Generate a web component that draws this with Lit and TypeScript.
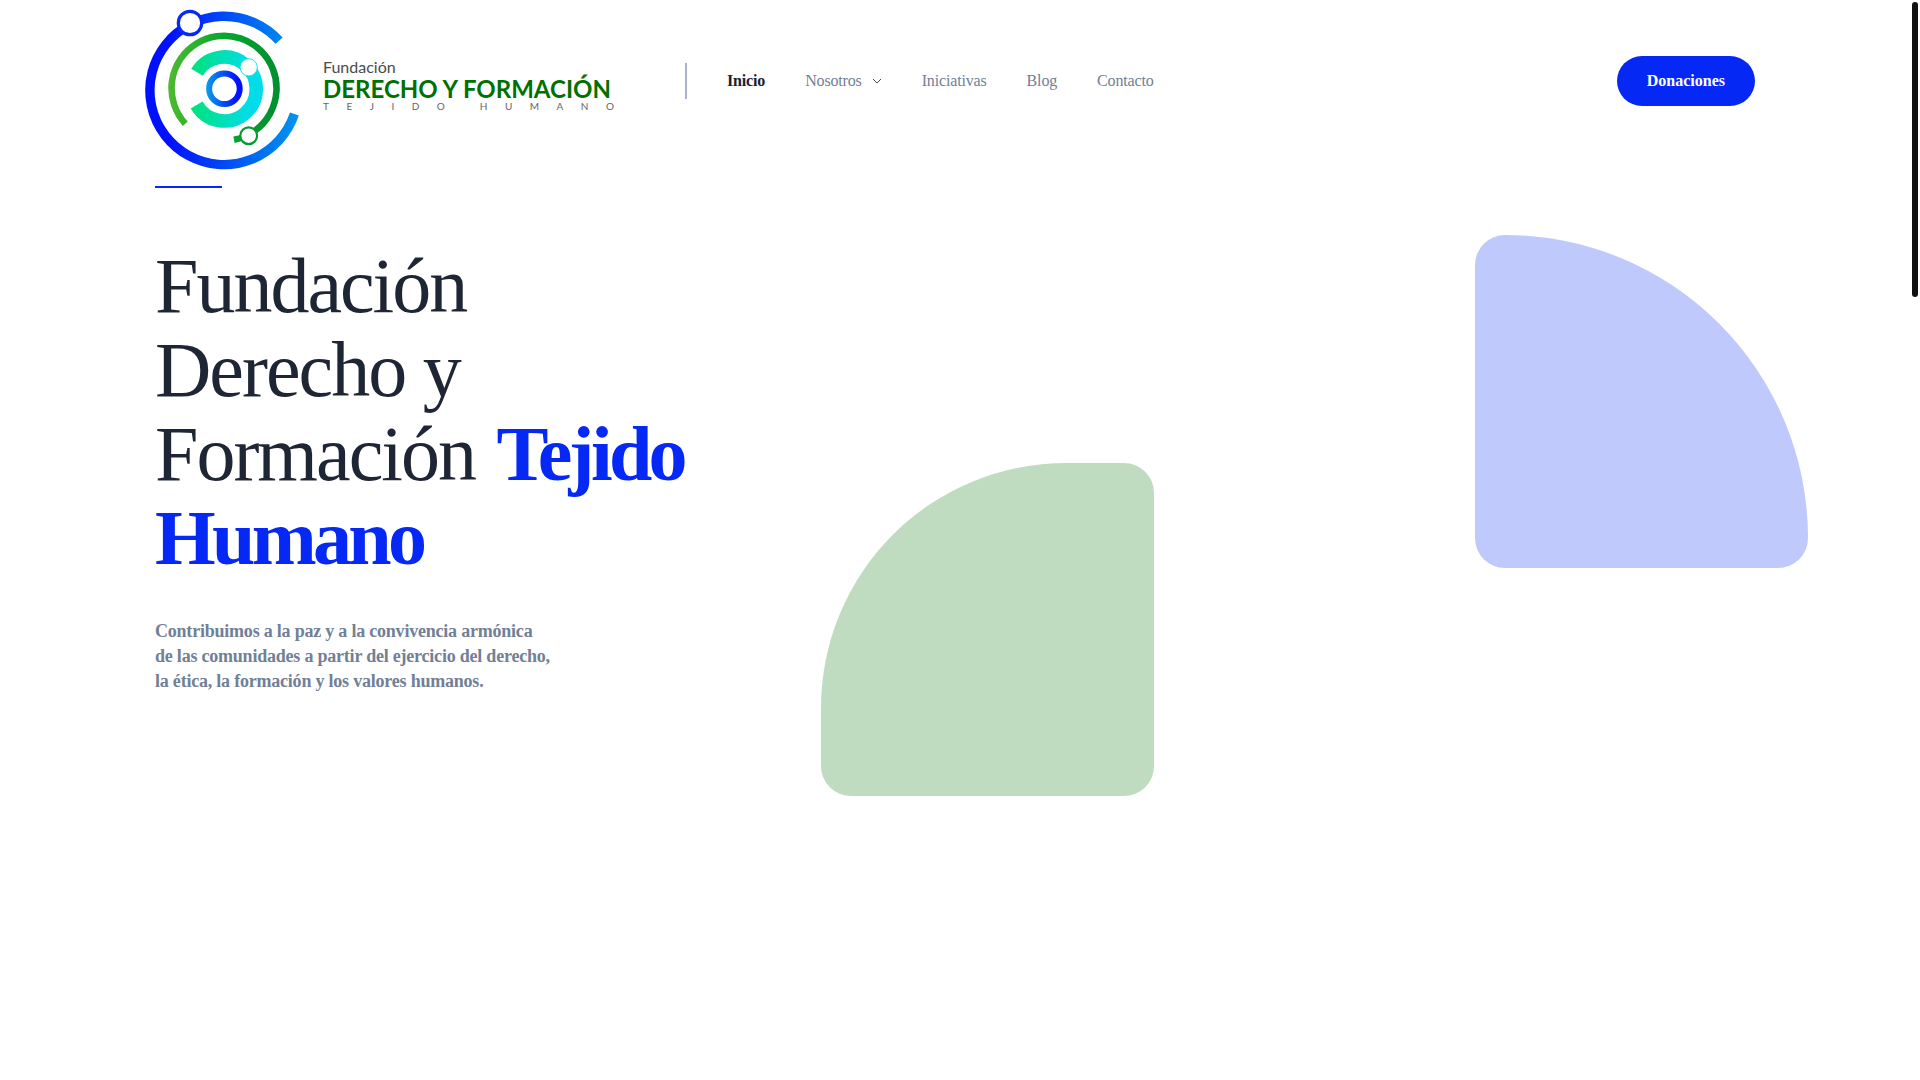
import { LitElement, html, css, svg } from "lit";
import { customElement } from "lit/decorators.js";

interface NavItem {
  label: string;
  href: string;
  active?: boolean;
  submenu?: boolean;
}

const NAV: NavItem[] = [
  { label: "Inicio", href: "#inicio", active: true },
  { label: "Nosotros", href: "#nosotros", submenu: true },
  { label: "Iniciativas", href: "#iniciativas" },
  { label: "Blog", href: "#blog" },
  { label: "Contacto", href: "#contacto" },
];

const emblem = svg`
  <defs>
    <linearGradient id="outer" gradientUnits="userSpaceOnUse" x1="15" y1="90" x2="170" y2="90">
      <stop offset="0.15" stop-color="#0010ff" />
      <stop offset="1" stop-color="#0098ea" />
    </linearGradient>
    <linearGradient id="middle" gradientUnits="userSpaceOnUse" x1="39" y1="90" x2="150" y2="90">
      <stop offset="0" stop-color="#4dba2f" />
      <stop offset="0.5" stop-color="#06a62f" />
      <stop offset="1" stop-color="#008f2f" />
    </linearGradient>
    <linearGradient id="inner" gradientUnits="userSpaceOnUse" x1="62" y1="90" x2="133" y2="90">
      <stop offset="0" stop-color="#00e27c" />
      <stop offset="0.8" stop-color="#00dde8" />
    </linearGradient>
    <linearGradient id="core" gradientUnits="userSpaceOnUse" x1="76" y1="90" x2="113" y2="90">
      <stop offset="0" stop-color="#0a9ee8" />
      <stop offset="0.85" stop-color="#0010ff" />
    </linearGradient>
  </defs>
  <g fill="none">
    <path d="M149.1 40.6 A74.2 74.2 0 1 0 164.4 114.1" stroke="url(#outer)" stroke-width="9.4" />
    <path d="M55.3 123.7 A52.5 52.5 0 1 1 104 139.8" stroke="url(#middle)" stroke-width="6.6" />
    <path d="M67 72.3 A32 32 0 1 1 66.6 105" stroke="url(#inner)" stroke-width="13.6" />
    <circle cx="94.4" cy="88.7" r="15.3" stroke="url(#core)" stroke-width="6" />
  </g>
  <g fill="#fff">
    <circle cx="60" cy="23" r="11.7" stroke="#0629f6" stroke-width="3.2" />
    <circle cx="118.7" cy="67.3" r="8.6" stroke="#1fdfe8" stroke-width="1" />
    <circle cx="118.7" cy="135.7" r="8.4" stroke="#049c30" stroke-width="2.2" />
  </g>
`;

@customElement("site-header")
class SiteHeader extends LitElement {
  static styles = css`
    :host {
      display: block;
    }
    .bar {
      display: flex;
      align-items: center;
      height: 162px;
    }
    .brand {
      display: flex;
      align-items: center;
      gap: 9px;
      flex: none;
      width: 555px;
      margin-left: -25px;
      text-decoration: none;
    }
    .emblem {
      flex: none;
      width: 184px;
      height: 180px;
      margin-bottom: -18px;
    }
    .wordmark {
      display: flex;
      flex-direction: column;
      width: 291px;
      padding-top: 6px;
      font-family: Lato, "Open Sans", sans-serif;
      white-space: nowrap;
    }
    .over {
      font-size: 16px;
      line-height: 20px;
      color: #4a4a4a;
    }
    .name {
      font-size: 24px;
      line-height: 24px;
      font-weight: 700;
      color: #007000;
    }
    .under {
      display: flex;
      justify-content: space-between;
      font-size: 10px;
      line-height: 10px;
      color: #666;
    }
    .nav {
      display: flex;
      align-items: center;
      gap: 40px;
      padding-left: 40px;
      border-left: 2px solid #a9b1d0;
      height: 36px;
      font-size: 16px;
      line-height: 20px;
      letter-spacing: -0.01em;
    }
    .link {
      display: flex;
      align-items: center;
      gap: 10px;
      color: #718096;
      text-decoration: none;
    }
    .active {
      color: #1a202c;
      font-weight: 700;
    }
    .donate {
      margin-left: auto;
      padding: 15px 30px;
      border-radius: 25px;
      background: #0528f5;
      color: #fff;
      font-size: 16px;
      line-height: 20px;
      font-weight: 700;
      text-decoration: none;
    }
  `;

  render() {
    return html`
      <header class="bar">
        <a class="brand" href="#inicio" aria-label="Fundación Derecho y Formación Tejido Humano">
          <svg class="emblem" viewBox="0 0 184 180" aria-hidden="true">${emblem}</svg>
          <span class="wordmark">
            <span class="over">Fundación</span>
            <span class="name">DERECHO Y FORMACIÓN</span>
            <span class="under">
              ${[..."TEJIDO"].map((c) => html`<span>${c}</span>`)}
              <span></span>
              ${[..."HUMANO"].map((c) => html`<span>${c}</span>`)}
            </span>
          </span>
        </a>
        <nav class="nav">
          ${NAV.map(
            (item) => html`<a class="link ${item.active ? "active" : ""}" href=${item.href}>${item.label}${
              item.submenu
                ? html`<svg width="10" height="6" viewBox="0 0 10 6" aria-hidden="true">
                    <path d="M1 1 L5 5 L9 1" fill="none" stroke="#1a202c" stroke-width="0.8" />
                  </svg>`
                : ""
            }</a>`
          )}
        </nav>
        <a class="donate" href="#donaciones">Donaciones</a>
      </header>
    `;
  }
}

@customElement("site-hero")
class SiteHero extends LitElement {
  static styles = css`
    :host {
      display: block;
    }
    .hero {
      display: flex;
      justify-content: space-between;
      padding-top: 24px;
      margin-right: -53px;
    }
    .copy {
      flex: 0 1 560px;
    }
    .rule {
      width: 67px;
      height: 2px;
      margin: 0 0 56px;
      border: 0;
      background: #0528f5;
    }
    .title {
      margin: 0 0 39px;
      font-size: 78px;
      line-height: 84px;
      font-weight: 400;
      letter-spacing: -2px;
      color: #1e2534;
    }
    .accent {
      margin-left: 4px;
      font-weight: 700;
      letter-spacing: -0.047em;
      color: #0528f5;
    }
    .lead {
      max-width: 400px;
      margin: 0;
      font-size: 18px;
      line-height: 25px;
      font-weight: 700;
      letter-spacing: -0.012em;
      color: #718096;
    }
    .line {
      display: block;
    }
    .art {
      display: flex;
      justify-content: space-between;
      flex: 0 1 987px;
    }
    .shape {
      width: 333px;
      height: 333px;
      border-radius: 30px;
    }
    .green {
      margin-top: 277px;
      border-top-left-radius: 245px;
      background: #c0dcc0;
    }
    .blue {
      margin-top: 49px;
      border-top-right-radius: 303px;
      background: #c0c9fc;
    }
  `;

  render() {
    return html`
      <section class="hero">
        <div class="copy">
          <hr class="rule" />
          <h1 class="title">
            Fundación Derecho y Formación <span class="accent">Tejido Humano</span>
          </h1>
          <p class="lead">
            <span class="line">Contribuimos a la paz y a la convivencia armónica</span>
            <span class="line">de las comunidades a partir del ejercicio del derecho,</span>
            <span class="line">la ética, la formación y los valores humanos.</span>
          </p>
        </div>
        <div class="art" aria-hidden="true">
          <div class="shape green"></div>
          <div class="shape blue"></div>
        </div>
      </section>
    `;
  }
}

@customElement("app-root")
class AppRoot extends LitElement {
  static styles = css`
    :host {
      display: block;
      min-height: 100vh;
      background: #fff;
      font-family: "Liberation Serif", "Times New Roman", serif;
    }
    .page {
      display: grid;
      grid-template-columns: 1fr 10px;
      min-height: 100vh;
      overflow: hidden;
    }
    .container {
      width: 100%;
      max-width: 1600px;
      margin: 0 auto;
    }
    .track {
      padding: 2px;
    }
    .thumb {
      width: 6px;
      height: 295px;
      border-radius: 3px;
      background: #111;
    }
  `;

  render() {
    return html`
      <div class="page">
        <main class="container">
          <site-header></site-header>
          <site-hero></site-hero>
        </main>
        <div class="track" aria-hidden="true"><div class="thumb"></div></div>
      </div>
    `;
  }
}
